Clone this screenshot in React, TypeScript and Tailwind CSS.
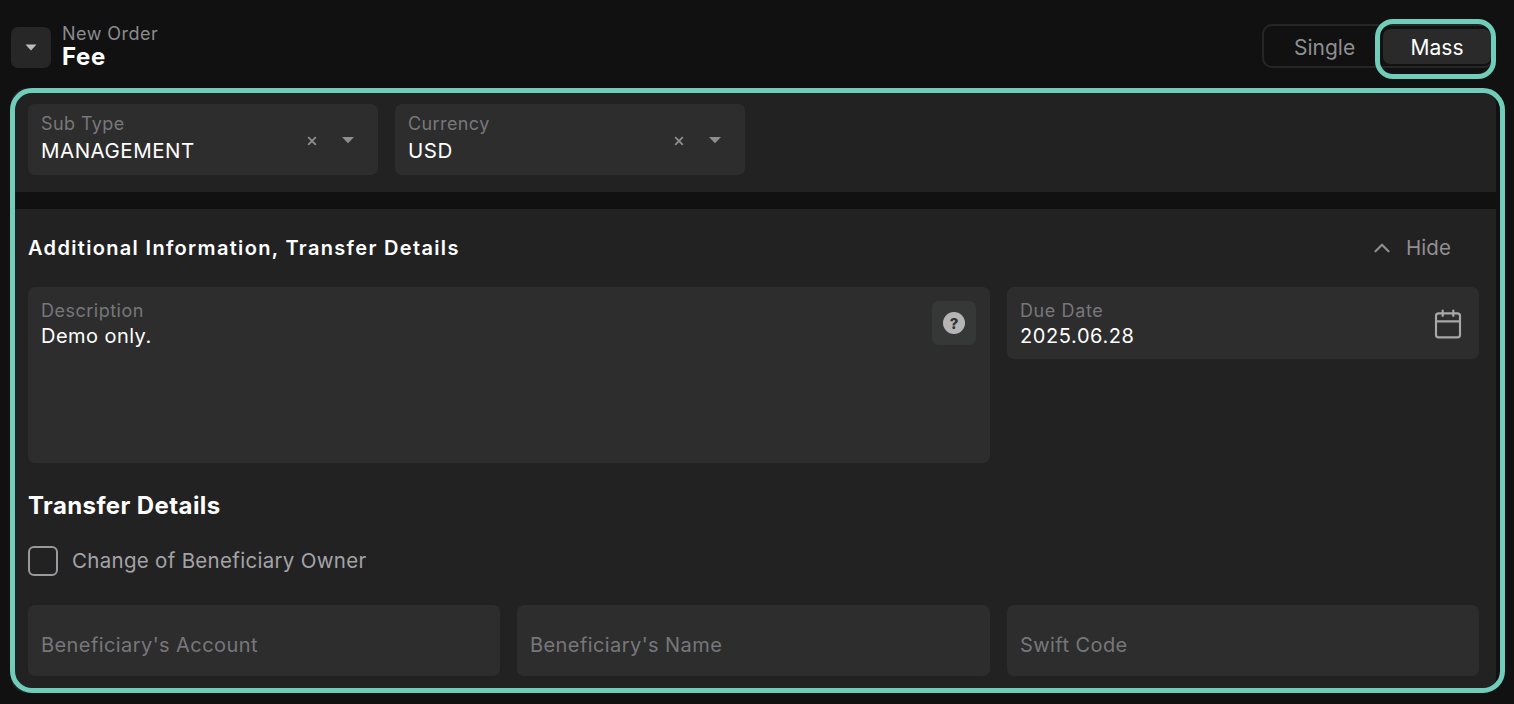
import { ChevronUp, Calendar } from 'lucide-react';

function Caret() {
  return (
    <svg width="14" height="8" viewBox="0 0 14 8" className="shrink-0 mt-[1px]">
      <path d="M1 1h12L7 7.2z" fill="#8d8d92" />
    </svg>
  );
}

function SelectField({ label, value }: { label: string; value: string }) {
  return (
    <div className="flex h-[71px] w-[350px] items-center rounded-[7px] bg-[#2d2d2d] pl-[13px] pr-[23px]">
      <div className="flex-1">
        <div className="mt-[-2px] text-[18px] leading-[24px] tracking-[0.4px] text-[#77777b]">{label}</div>
        <div className="mt-[1px] text-[20.5px] leading-[28px] tracking-[0.5px] text-white">{value}</div>
      </div>
      <svg width="10" height="10" viewBox="0 0 10 10" className="mr-[24px] mt-[2px]">
        <path d="M1.2 1.2l7.6 7.6M8.8 1.2l-7.6 7.6" stroke="#8d8d92" strokeWidth="1.8" />
      </svg>
      <Caret />
    </div>
  );
}

function EmptyField({ label, className }: { label: string; className: string }) {
  return (
    <div className={`flex h-[71px] items-center rounded-[7px] bg-[#2d2d2d] px-[13px] pt-[9px] text-[20px] tracking-[0.42px] text-[#77777b] ${className}`}>
      {label}
    </div>
  );
}

export default function App() {
  return (
    <div className='h-[704px] w-[1514px] overflow-hidden bg-[#111111] px-[11px] font-["Inter","Noto_Sans",sans-serif]'>
      {/* Header */}
      <div className="flex h-[88px] items-start justify-between">
        <div className="mt-[22px] flex items-center gap-[11px]">
          <button className="mt-[4px] flex h-[41px] w-[40px] items-center justify-center rounded-[7px] bg-[#272727]">
            <svg width="12" height="7" viewBox="0 0 12 7">
              <path d="M0.5 0.5h11L6 6.5z" fill="#bdbdbd" />
            </svg>
          </button>
          <div>
            <div className="pt-[1px] text-[18px] leading-[22px] tracking-[0.45px] text-[#8b8b8f]">New Order</div>
            <div className="text-[24px] font-bold leading-[23px] tracking-[0.6px] text-white">Fee</div>
          </div>
        </div>

        <div className="mr-[9px] mt-[24px] flex h-[44px] w-[232px] items-center justify-between rounded-[10px] border-2 border-[#262626] pr-[1px]">
          <span className="ml-[30px] pt-[3px] text-[21px] text-[#8f8f93]">Single</span>
          <div className="relative flex h-[35px] w-[108px] items-center justify-center rounded-[7px] bg-[#2a2a2a] pt-[3px] text-[21px] text-white">
            Mass
            <div className="absolute -bottom-[15px] -left-[8px] -right-[5px] -top-[10px] rounded-[18px] border-[5px] border-[#6fcdb9]" />
          </div>
        </div>
      </div>

      {/* Form */}
      <div className="relative flex w-[1485px] flex-col gap-[17px]">
        <div className="absolute bottom-0 -left-[1px] -right-[9px] top-0 z-10 rounded-[22px] border-[5px] border-[#6fcdb9]" />

        <div className="flex gap-[17px] rounded-t-[16px] bg-[#222222] px-[17px] pb-[17px] pt-[16px]">
          <SelectField label="Sub Type" value="MANAGEMENT" />
          <SelectField label="Currency" value="USD" />
        </div>

        <div className="flex h-[484px] flex-col rounded-b-[16px] bg-[#222222] px-[17px]">
          <div className="flex h-[78px] items-center justify-between pr-[28px]">
            <h2 className="text-[20px] font-semibold tracking-[1.33px] text-white">
              Additional Information, Transfer Details
            </h2>
            <div className="flex items-center gap-[11px] text-[20.5px] tracking-[0.1px] text-[#8f8f93]">
              <ChevronUp size={26} strokeWidth={2} />
              Hide
            </div>
          </div>

          <div className="flex gap-[17px]">
            <div className="flex h-[176px] w-[962px] justify-between rounded-[7px] bg-[#2d2d2d] pl-[13px] pr-[14px] pt-[12px]">
              <div>
                <div className="text-[18px] leading-[24px] tracking-[0.5px] text-[#77777b]">Description</div>
                <div className="text-[20px] leading-[26px] tracking-[0.45px] text-white">Demo only.</div>
              </div>
              <div className="mt-[2px] flex h-[44px] w-[44px] items-center justify-center rounded-[7px] bg-[#363838]">
                <svg width="24" height="24" viewBox="0 0 24 24">
                  <circle cx="12" cy="12" r="11" fill="#b5b5b5" />
                  <text x="12" y="17.5" textAnchor="middle" fontSize="15" fontWeight="800" fill="#333">?</text>
                </svg>
              </div>
            </div>
            <div className="flex h-[72px] w-[472px] items-center justify-between rounded-[7px] bg-[#2d2d2d] pl-[13px] pr-[15px] pt-[2px]">
              <div>
                <div className="text-[18px] leading-[24px] tracking-[0.6px] text-[#77777b]">Due Date</div>
                <div className="text-[20px] leading-[26px] tracking-[0.6px] text-white">2025.06.28</div>
              </div>
              <Calendar size={32} strokeWidth={1.6} className="text-[#a8a8a8]" />
            </div>
          </div>

          <h3 className="mt-[26px] text-[24px] font-bold leading-[34px] tracking-[0.4px] text-white">Transfer Details</h3>

          <div className="mt-[23px] flex items-center gap-[14px]">
            <div className="h-[30px] w-[30px] rounded-[6px] border-2 border-[#9a9a9e]" />
            <span className="text-[20.5px] tracking-[0.3px] text-[#a4a4a8]">Change of Beneficiary Owner</span>
          </div>

          <div className="mt-[28px] flex gap-[17px]">
            <EmptyField label="Beneficiary's Account" className="w-[472px]" />
            <EmptyField label="Beneficiary's Name" className="w-[473px]" />
            <EmptyField label="Swift Code" className="w-[472px]" />
          </div>
        </div>
      </div>
    </div>
  );
}
